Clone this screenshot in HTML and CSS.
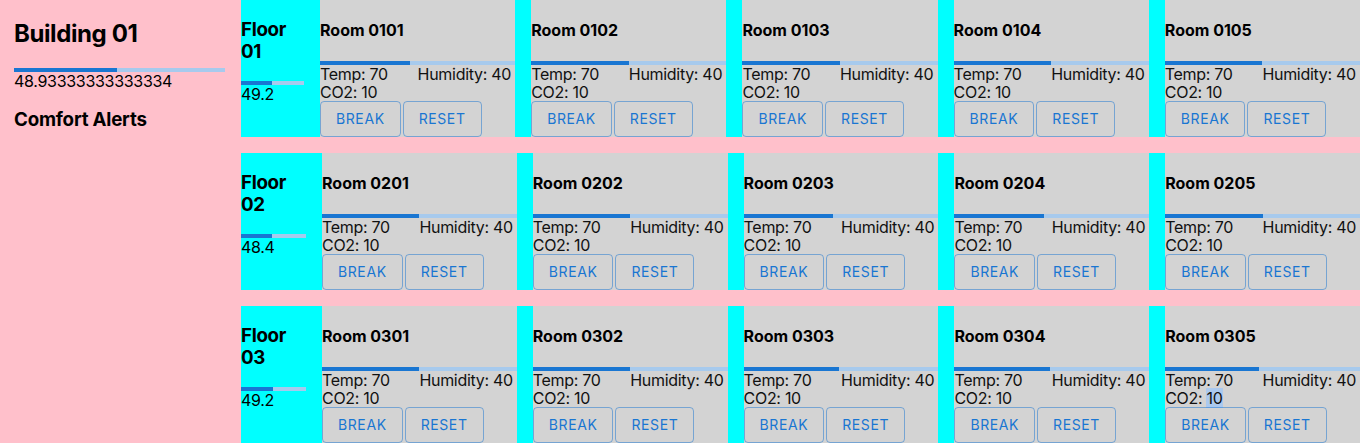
FILE: index.html
```html
<!DOCTYPE html>
<html lang="en">
<head>
<meta charset="utf-8">
<title>Building 01</title>
<link rel="stylesheet" href="styles.css">
</head>
<body>
<div class="app">
  <aside class="sidebar">
    <h2 class="building-title">Building 01</h2>
    <div class="progress"><div class="progress-fill" style="width:48.93%"></div></div>
    <div class="value">48.93333333333334</div>
    <h3 class="alerts-title">Comfort Alerts</h3>
  </aside>
  <main class="floors">
    <section class="floor-row">
      <div class="floor">
        <h3 class="floor-title">Floor 01</h3>
        <div class="progress"><div class="progress-fill" style="width:49.2%"></div></div>
        <div class="value">49.2</div>
      </div>
      <div class="room">
        <h4 class="room-title">Room 0101</h4>
        <div class="progress"><div class="progress-fill" style="width:46%"></div></div>
        <div class="readings"><span>Temp: 70</span><span>Humidity: 40</span><span>CO2: 10</span></div>
        <div class="actions"><button class="btn">Break</button><button class="btn">Reset</button></div>
      </div>
      <div class="room">
        <h4 class="room-title">Room 0102</h4>
        <div class="progress"><div class="progress-fill" style="width:50%"></div></div>
        <div class="readings"><span>Temp: 70</span><span>Humidity: 40</span><span>CO2: 10</span></div>
        <div class="actions"><button class="btn">Break</button><button class="btn">Reset</button></div>
      </div>
      <div class="room">
        <h4 class="room-title">Room 0103</h4>
        <div class="progress"><div class="progress-fill" style="width:50%"></div></div>
        <div class="readings"><span>Temp: 70</span><span>Humidity: 40</span><span>CO2: 10</span></div>
        <div class="actions"><button class="btn">Break</button><button class="btn">Reset</button></div>
      </div>
      <div class="room">
        <h4 class="room-title">Room 0104</h4>
        <div class="progress"><div class="progress-fill" style="width:50%"></div></div>
        <div class="readings"><span>Temp: 70</span><span>Humidity: 40</span><span>CO2: 10</span></div>
        <div class="actions"><button class="btn">Break</button><button class="btn">Reset</button></div>
      </div>
      <div class="room">
        <h4 class="room-title">Room 0105</h4>
        <div class="progress"><div class="progress-fill" style="width:50%"></div></div>
        <div class="readings"><span>Temp: 70</span><span>Humidity: 40</span><span>CO2: 10</span></div>
        <div class="actions"><button class="btn">Break</button><button class="btn">Reset</button></div>
      </div>
    </section>

    <section class="floor-row">
      <div class="floor floor--wide">
        <h3 class="floor-title">Floor 02</h3>
        <div class="progress"><div class="progress-fill" style="width:48.4%"></div></div>
        <div class="value">48.4</div>
      </div>
      <div class="room">
        <h4 class="room-title">Room 0201</h4>
        <div class="progress"><div class="progress-fill" style="width:50%"></div></div>
        <div class="readings"><span>Temp: 70</span><span>Humidity: 40</span><span>CO2: 10</span></div>
        <div class="actions"><button class="btn">Break</button><button class="btn">Reset</button></div>
      </div>
      <div class="room">
        <h4 class="room-title">Room 0202</h4>
        <div class="progress"><div class="progress-fill" style="width:50%"></div></div>
        <div class="readings"><span>Temp: 70</span><span>Humidity: 40</span><span>CO2: 10</span></div>
        <div class="actions"><button class="btn">Break</button><button class="btn">Reset</button></div>
      </div>
      <div class="room">
        <h4 class="room-title">Room 0203</h4>
        <div class="progress"><div class="progress-fill" style="width:46%"></div></div>
        <div class="readings"><span>Temp: 70</span><span>Humidity: 40</span><span>CO2: 10</span></div>
        <div class="actions"><button class="btn">Break</button><button class="btn">Reset</button></div>
      </div>
      <div class="room">
        <h4 class="room-title">Room 0204</h4>
        <div class="progress"><div class="progress-fill" style="width:46%"></div></div>
        <div class="readings"><span>Temp: 70</span><span>Humidity: 40</span><span>CO2: 10</span></div>
        <div class="actions"><button class="btn">Break</button><button class="btn">Reset</button></div>
      </div>
      <div class="room">
        <h4 class="room-title">Room 0205</h4>
        <div class="progress"><div class="progress-fill" style="width:50%"></div></div>
        <div class="readings"><span>Temp: 70</span><span>Humidity: 40</span><span>CO2: 10</span></div>
        <div class="actions"><button class="btn">Break</button><button class="btn">Reset</button></div>
      </div>
    </section>

    <section class="floor-row">
      <div class="floor floor--wide">
        <h3 class="floor-title">Floor 03</h3>
        <div class="progress"><div class="progress-fill" style="width:49.2%"></div></div>
        <div class="value">49.2</div>
      </div>
      <div class="room">
        <h4 class="room-title">Room 0301</h4>
        <div class="progress"><div class="progress-fill" style="width:50%"></div></div>
        <div class="readings"><span>Temp: 70</span><span>Humidity: 40</span><span>CO2: 10</span></div>
        <div class="actions"><button class="btn">Break</button><button class="btn">Reset</button></div>
      </div>
      <div class="room">
        <h4 class="room-title">Room 0302</h4>
        <div class="progress"><div class="progress-fill" style="width:50%"></div></div>
        <div class="readings"><span>Temp: 70</span><span>Humidity: 40</span><span>CO2: 10</span></div>
        <div class="actions"><button class="btn">Break</button><button class="btn">Reset</button></div>
      </div>
      <div class="room">
        <h4 class="room-title">Room 0303</h4>
        <div class="progress"><div class="progress-fill" style="width:49%"></div></div>
        <div class="readings"><span>Temp: 70</span><span>Humidity: 40</span><span>CO2: 10</span></div>
        <div class="actions"><button class="btn">Break</button><button class="btn">Reset</button></div>
      </div>
      <div class="room">
        <h4 class="room-title">Room 0304</h4>
        <div class="progress"><div class="progress-fill" style="width:49%"></div></div>
        <div class="readings"><span>Temp: 70</span><span>Humidity: 40</span><span>CO2: 10</span></div>
        <div class="actions"><button class="btn">Break</button><button class="btn">Reset</button></div>
      </div>
      <div class="room">
        <h4 class="room-title">Room 0305</h4>
        <div class="progress"><div class="progress-fill" style="width:48%"></div></div>
        <div class="readings"><span>Temp: 70</span><span>Humidity: 40</span><span>CO2: <span class="selected">10</span></span></div>
        <div class="actions"><button class="btn">Break</button><button class="btn">Reset</button></div>
      </div>
    </section>
  </main>
</div>
</body>
</html>
```

FILE: styles.css
```css
html, body {
  margin: 0;
  padding: 0;
}

body {
  background: #ffc0cb;
  color: #000;
  font-family: Inter, "Noto Sans", "Liberation Sans", sans-serif;
  font-size: 16px;
  line-height: 18px;
  letter-spacing: -0.3px;
}

.app {
  display: flex;
  gap: 16px;
  align-items: flex-start;
}

.sidebar {
  flex: 0 0 211px;
  margin-left: 14px;
}

.building-title {
  font-size: 24px;
  line-height: 28.5px;
  font-weight: 700;
  letter-spacing: -0.4px;
  margin: 19.92px 0;
}

.alerts-title {
  font-size: 18.72px;
  line-height: 21.8px;
  font-weight: 700;
  letter-spacing: -0.2px;
  margin: 18.72px 0;
}

.progress {
  height: 4px;
  background: #a7caed;
  overflow: hidden;
}

.progress-fill {
  height: 100%;
  background: #1976d2;
}

.value {
  line-height: 18px;
}

.floors {
  flex: 1 1 auto;
  min-width: 0;
  display: flex;
  flex-direction: column;
  gap: 16px;
}

.floor-row {
  display: flex;
  gap: 16px;
  background: #00ffff;
}

.floor {
  flex: 0 0 63px;
  min-width: 0;
}

.floor--wide {
  flex-basis: 65px;
}

.floor-title {
  font-size: 18.72px;
  line-height: 21.8px;
  font-weight: 700;
  letter-spacing: -0.3px;
  margin: 18.72px 0;
}

.room {
  flex: 1 1 0;
  min-width: 0;
  background: #d3d3d3;
}

.room-title {
  font-size: 16px;
  line-height: 18px;
  font-weight: 700;
  letter-spacing: 0;
  margin: 21.28px 0;
  white-space: nowrap;
}

.readings {
  display: grid;
  grid-template-columns: 1fr 1fr;
  white-space: nowrap;
  color: #111;
}

.selected {
  background: #abc9ee;
}

.actions {
  display: flex;
  gap: 2px;
}

.btn {
  font-family: Inter, "Noto Sans", "Liberation Sans", sans-serif;
  font-size: 14px;
  font-weight: 400;
  line-height: 24.5px;
  letter-spacing: 0.6px;
  text-transform: uppercase;
  color: #1976d2;
  background: transparent;
  border: 1px solid rgba(25, 118, 210, 0.5);
  border-radius: 4px;
  padding: 5px 15px;
  min-width: 64px;
  margin: 0;
  cursor: pointer;
}
```
